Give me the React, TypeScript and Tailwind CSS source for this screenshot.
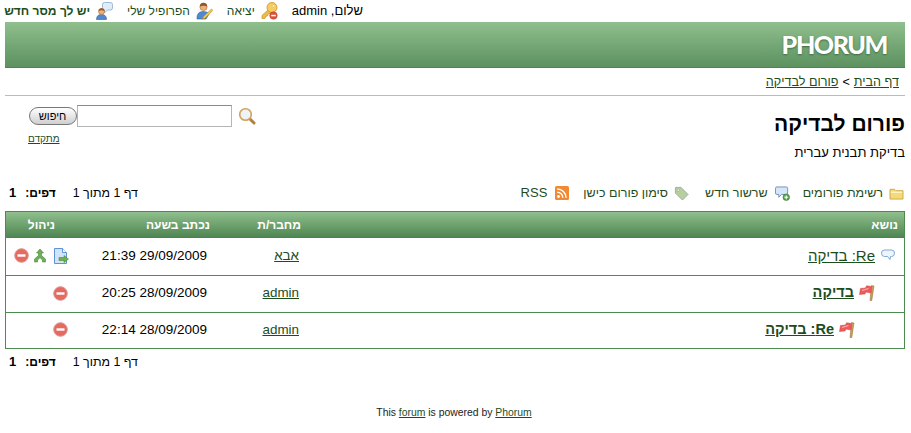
const link = "text-[#1d4d1d] underline";

function Key() {
  return (
    <svg width="17" height="18" viewBox="0 0 17 18">
      <path d="M8 7 L1 13.5 L1 16.5 L4 16.5 L4.5 14.5 L6.5 14 L7 12 L9 11.5 L11 10 Z" fill="#f0bb45" stroke="#c6902a" strokeWidth="0.7" />
      <circle cx="11" cy="5.5" r="5" fill="#f6cd5e" stroke="#c6902a" strokeWidth="0.8" />
      <circle cx="12.5" cy="4" r="1.3" fill="#fff6cf" stroke="#d6a83e" strokeWidth="0.4" />
      <circle cx="12.5" cy="13.5" r="3.8" fill="#dc4f3c" stroke="#b93a2a" strokeWidth="0.4" />
      <rect x="10.2" y="12.8" width="4.6" height="1.5" fill="#fff" />
    </svg>
  );
}
function Person() {
  return (
    <svg width="17" height="18" viewBox="0 0 17 18">
      <path d="M1 17 Q0.5 9.5 7 9.5 Q12 9.5 13 12 L10 17 Z" fill="#4f8ad0" stroke="#2e5f9a" strokeWidth="0.6" />
      <circle cx="7.5" cy="5" r="3.6" fill="#eeb07a" stroke="#a8683a" strokeWidth="0.6" />
      <path d="M3.8 4.5 Q4 0.8 7.5 0.8 Q11 0.8 11.2 4.5 Q8 2.8 3.8 4.5 Z" fill="#8a5a2c" />
      <path d="M15.5 7 L7.5 14.5 L6.5 17 L9 16.3 L16.8 8.5 Z" fill="#f3c752" stroke="#b8862a" strokeWidth="0.6" />
    </svg>
  );
}
function PersonBubble() {
  return (
    <svg width="17" height="18" viewBox="0 0 17 18">
      <path d="M8.5 0.5 H14.5 Q16.5 0.5 16.5 2.5 V6 Q16.5 8 14.5 8 H11.5 L8.5 11 V8 Q6.5 7.5 6.5 5.5 V2.5 Q6.5 0.5 8.5 0.5 Z" fill="#dfedfb" stroke="#8aa9cc" strokeWidth="0.8" />
      <path d="M0.5 17.5 Q0.5 12.5 5.5 12.5 Q10.5 12.5 10.5 17.5 Z" fill="#4f8ad0" stroke="#2e5f9a" strokeWidth="0.6" />
      <circle cx="5.5" cy="9.5" r="3" fill="#eeb07a" stroke="#a8683a" strokeWidth="0.6" />
      <path d="M2.5 9 Q3 6.2 5.5 6.2 Q8 6.2 8.5 9 Q5.5 7.6 2.5 9 Z" fill="#8a5a2c" />
    </svg>
  );
}
function Folder() {
  return (
    <svg width="15" height="13" viewBox="0 0 16 14">
      <path d="M1 2.5 H6 L7.5 4 H15 V13 H1 Z" fill="#f6d978" stroke="#c9a648" />
      <rect x="2" y="5" width="12" height="1.5" fill="#fff3c0" />
    </svg>
  );
}
function NewThread() {
  return (
    <svg width="15" height="15" viewBox="0 0 16 16">
      <path d="M2 1 H12 Q13.5 1 13.5 2.5 V7.5 Q13.5 9 12 9 H7 L4 12 V9 H2 Q0.5 9 0.5 7.5 V2.5 Q0.5 1 2 1 Z" fill="#d5e6f8" stroke="#6b8fb8" />
      <circle cx="12" cy="12" r="3.5" fill="#5aa04a" stroke="#3b7a30" strokeWidth="0.6" />
      <path d="M10 12 H14 M12 10 V14" stroke="#fff" strokeWidth="1.2" />
    </svg>
  );
}
function Tag() {
  return (
    <svg width="15" height="15" viewBox="0 0 16 16">
      <path d="M1.5 1.5 H7.5 L15 9 L9 15 L1.5 7.5 Z" fill="#b5cf9f" stroke="#a8a8a8" />
      <circle cx="4.5" cy="4.5" r="1.2" fill="#fff" stroke="#888" strokeWidth="0.5" />
    </svg>
  );
}
function Rss() {
  return (
    <svg width="14" height="14" viewBox="0 0 14 14">
      <rect width="14" height="14" rx="1.5" fill="#f08a34" />
      <circle cx="3.5" cy="10.5" r="1.4" fill="#fff" />
      <path d="M2.2 6.2 A5.6 5.6 0 0 1 7.8 11.8 M2.2 3 A8.8 8.8 0 0 1 11 11.8" fill="none" stroke="#fff" strokeWidth="1.5" />
    </svg>
  );
}
function Bubble() {
  return (
    <svg width="14" height="14" viewBox="0 0 14 14">
      <path d="M3.5 1 H10.5 Q13.5 1 13.5 4.2 Q13.5 7.5 10.5 7.5 H9.5 L9 10.5 L6.5 7.5 H3.5 Q0.5 7.5 0.5 4.2 Q0.5 1 3.5 1 Z" fill="#edf5fd" stroke="#7ea6d6" />
    </svg>
  );
}
function Flag() {
  return (
    <svg width="16" height="16" viewBox="0 0 16 16">
      <path d="M12.5 0.5 L15 1 L12.8 15.5 L11 15.5 Z" fill="#c89a5a" stroke="#96703a" strokeWidth="0.5" />
      <path d="M12.5 1.5 L7.5 0.8 L6.5 3 L1.5 3.5 L0.5 9.5 L6 9 L7 7 L11.8 8 Z" fill="#ee5b5b" stroke="#cf4343" strokeWidth="0.5" />
      <path d="M3 5.5 L9.5 3.5" stroke="#f9b3b3" strokeWidth="1.2" />
    </svg>
  );
}
function Stop() {
  return (
    <svg width="15" height="15" viewBox="0 0 15 15">
      <circle cx="7.5" cy="7.5" r="6.8" fill="#e76a60" stroke="#d9958c" />
      <rect x="3.5" y="6.3" width="8" height="2.4" fill="#fff" />
    </svg>
  );
}
function Split() {
  return (
    <svg width="14" height="15" viewBox="0 0 14 15">
      <path d="M7 1 L10.5 5 H8.5 V7.5 L12.5 11 V14 H9.5 V12 L7 9.8 L4.5 12 V14 H1.5 V11 L5.5 7.5 V5 H3.5 Z" fill="#6fae58" stroke="#4a8a3a" strokeWidth="0.6" />
    </svg>
  );
}
function Move() {
  return (
    <svg width="16" height="16" viewBox="0 0 16 16">
      <path d="M1.5 0.5 H9.5 L13.5 4.5 V15.5 H1.5 Z" fill="#cfe3f9" stroke="#5f93d6" />
      <path d="M9.5 0.5 V4.5 H13.5" fill="#fff" stroke="#5f93d6" />
      <path d="M6 9.5 H11 V7.5 L15.5 11 L11 14.5 V12.5 H6 Z" fill="#6fb04f" stroke="#3f7f30" strokeWidth="0.5" />
    </svg>
  );
}
function Magnifier() {
  return (
    <svg width="18" height="18" viewBox="0 0 18 18">
      <path d="M11 11 L16 16" stroke="#b5803c" strokeWidth="3" strokeLinecap="round" />
      <circle cx="7.5" cy="7.5" r="5.8" fill="#eef3f7" stroke="#d1a35e" strokeWidth="1.6" />
    </svg>
  );
}

function Pager() {
  return (
    <div className="flex items-center text-[12.4px] whitespace-nowrap">
      <span>דף 1 מתוך 1</span>
      <span className="font-bold mr-[17px] text-[12px]">דפים:</span>
      <span className="font-bold mr-[9px] text-[13px]">1</span>
    </div>
  );
}

const rows = [
  { icon: <Bubble />, pad: "pr-[9px]", gap: "ml-[6px]", title: "Re: בדיקה", bold: false, author: "אבא", date: "29/09/2009 21:39", full: true, last: false },
  { icon: <Flag />, pad: "pr-[29px]", gap: "ml-[5px]", title: "בדיקה", bold: true, author: "admin", date: "28/09/2009 20:25", full: false, last: false },
  { icon: <Flag />, pad: "pr-[49px]", gap: "ml-[5px]", title: "Re: בדיקה", bold: true, author: "admin", date: "28/09/2009 22:14", full: false, last: true },
];

export default function App() {
  return (
    <div dir="rtl" className="w-[911px] h-[433px] overflow-hidden bg-white pl-[5px] pr-[6px] text-[13px] text-black font-['Liberation_Sans',sans-serif]">
      <div className="flex items-center h-[22px] text-[12px] whitespace-nowrap">
        <span className="mr-[542px] text-[13px]">שלום, admin</span>
        <span className="flex items-center mr-[14px]"><Key /></span>
        <span className="text-[#1d4d1d] mr-[6px]">יציאה</span>
        <span className="flex items-center mr-[14px]"><Person /></span>
        <span className="text-[#1d4d1d] mr-[6px]">הפרופיל שלי</span>
        <span className="flex items-center mr-[14px]"><PersonBubble /></span>
        <span className="text-[#1d4d1d] font-bold mr-[6px]">יש לך מסר חדש</span>
      </div>

      <div dir="ltr" className="h-[46px] flex items-center justify-end bg-gradient-to-b from-[#8fbf8d] to-[#5d9160] border-b border-[#4f8452] pr-[18px]">
        <span className="text-[25px] tracking-[-1.4px] font-black text-white [text-shadow:0_1px_2px_#3c6a40] font-['Lato',sans-serif]">PHORUM</span>
      </div>

      <div className="h-[28px] flex items-center border-b border-[#bbbbbb] text-[12.6px] pr-[6px] pt-[1px]">
        <a className={link}>דף הבית</a>
        <span className="mx-[4px]">&gt;</span>
        <a className={link}>פורום לבדיקה</a>
      </div>

      <div className="flex justify-between h-[76px]">
        <div className="pt-[12px]">
          <h1 className="text-[21px] leading-[32px] font-bold">פורום לבדיקה</h1>
          <p className="text-[13px] mt-[3px]">בדיקת תבנית עברית</p>
        </div>
        <div className="pt-[9px] pl-[23px]">
          <div className="flex items-center">
            <Magnifier />
            <input className="w-[155px] h-[22px] mr-[6px] border border-[#b5b5b5] border-t-[#8a8a8a] bg-white" />
            <button className="w-[48px] h-[18px] rounded-full border border-[#777] bg-gradient-to-b from-white to-[#cfcfcf] text-[11px] leading-none">חיפוש</button>
          </div>
          <div className="mt-[4px] mr-[196px] text-[10px]"><a className={link}>מתקדם</a></div>
        </div>
      </div>

      <div className="mt-[11px] flex justify-between items-center h-[20px]">
        <div className="flex items-center text-[12.5px] text-[#1d4d1d] pr-[1px]">
          <Folder />
          <span className="mr-[6px]">רשימת פורומים</span>
          <span className="mr-[13px] flex"><NewThread /></span>
          <span className="mr-[7px]">שרשור חדש</span>
          <span className="mr-[16px] flex"><Tag /></span>
          <span className="mr-[6px]">סימון פורום כישן</span>
          <span className="mr-[14px] flex"><Rss /></span>
          <span className="mr-[8px] text-[13px]">RSS</span>
        </div>
        <div className="pl-[4px]"><Pager /></div>
      </div>

      <div className="mt-[8px] w-[900px] border border-[#4c8a4e]">
        <table className="w-full border-collapse table-fixed text-[13px]">
          <colgroup>
            <col className="w-[598px]" />
            <col className="w-[91px]" />
            <col className="w-[145px]" />
            <col className="w-[64px]" />
          </colgroup>
          <thead>
            <tr className="h-[26px] bg-gradient-to-b from-[#8fbf8d] to-[#4c8450] text-white text-[12px]">
              <th className="text-right pr-[6px] font-bold">נושא</th>
              <th className="text-right pr-[5px] font-bold">מחבר/ת</th>
              <th className="text-right pr-[5px] font-bold">נכתב בשעה</th>
              <th className="text-right pr-[15px] font-bold">ניהול</th>
            </tr>
          </thead>
          <tbody>
            {rows.map((r, i) => {
              const line = r.last ? "" : "border-b border-[#4c8a4e]";
              return (
                <tr key={i} className={r.last ? "h-[36px]" : "h-[37px]"}>
                  <td className={`${r.pad} pb-[1px] ${line}`}>
                    <div className="flex items-center">
                      <span className={`${r.gap} flex`}>{r.icon}</span>
                      <a className={`${link} ${r.bold ? "font-bold text-[14.5px]" : "text-[15px]"}`}>{r.title}</a>
                    </div>
                  </td>
                  <td className={`pr-[7px] pb-[1px] ${line}`}><a className={`${link} text-[13.4px]`}>{r.author}</a></td>
                  <td className={`pr-[8px] pb-[1px] text-[13.5px] ${line}`}>{r.date}</td>
                  <td className={`pb-[1px] ${line}`}>
                    <div className="flex items-center justify-end" dir="ltr">
                      {r.full ? (
                        <>
                          <Stop />
                          <span className="ml-[4px] mr-[6px] flex"><Split /></span>
                          <span className="pr-[1px] flex"><Move /></span>
                        </>
                      ) : (
                        <span className="pr-[2px] flex"><Stop /></span>
                      )}
                    </div>
                  </td>
                </tr>
              );
            })}
          </tbody>
        </table>
      </div>

      <div className="flex justify-end items-center h-[26px] pl-[4px]"><Pager /></div>

      <div dir="ltr" className="text-center text-[10.4px] mt-[30px] pr-[2px] text-[#222]">
        This <a className={link}>forum</a> is powered by <a className={link}>Phorum</a>
      </div>
    </div>
  );
}
